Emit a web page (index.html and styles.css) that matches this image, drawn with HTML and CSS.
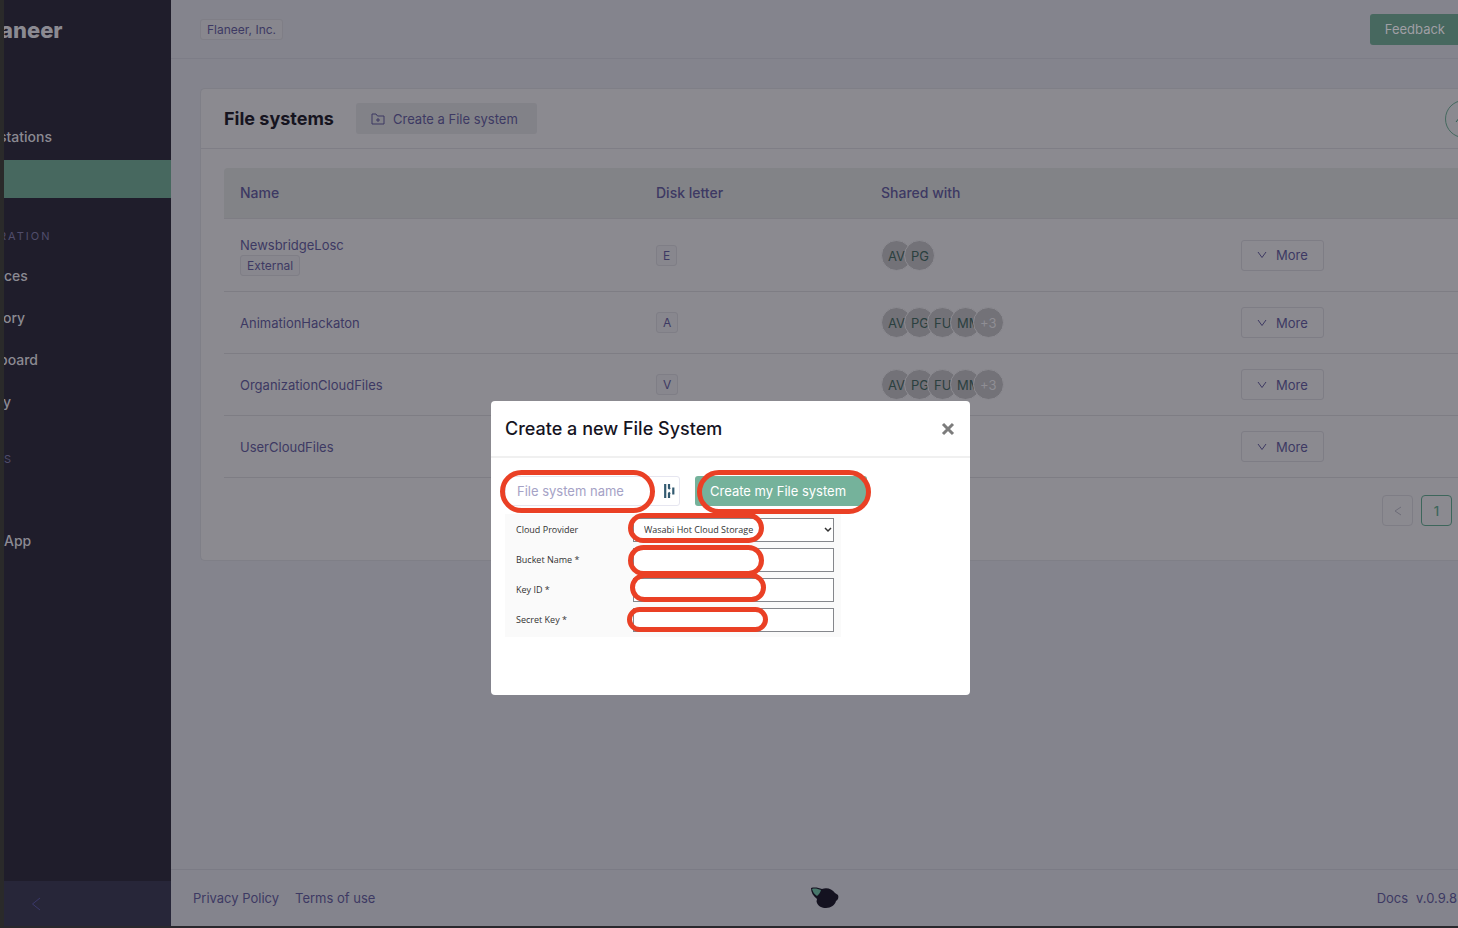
FILE: index.html
```html
<!DOCTYPE html>
<html lang="en">
<head>
<meta charset="utf-8">
<title>File systems</title>
<link rel="stylesheet" href="styles.css">
</head>
<body>
<div class="app">
  <aside class="sidebar">
    <div class="brand">aneer</div>
    <nav class="nav">
      <a class="nav-link cut-deep" href="#">stations</a>
      <a class="nav-link active" href="#" aria-label="File systems"></a>
      <h2 class="nav-title cut-deep">RATION</h2>
      <a class="nav-link" href="#">ces</a>
      <a class="nav-link cut" href="#">ory</a>
      <a class="nav-link cut-deep" href="#">board</a>
      <a class="nav-link cut" href="#">y</a>
      <h2 class="nav-title second">S</h2>
      <a class="nav-link last" href="#">App</a>
    </nav>
    <button class="collapse" aria-label="Collapse menu">
      <svg width="10" height="14" viewBox="0 0 10 14"><path d="M9 1 1.5 7 9 13"/></svg>
    </button>
  </aside>

  <div class="page">
    <header class="topbar">
      <span class="tag">Flaneer, Inc.</span>
      <button class="feedback">Feedback</button>
    </header>

    <main class="content">
      <section class="card">
        <div class="card-head">
          <h1>File systems</h1>
          <button class="create">
            <svg width="14" height="12" viewBox="0 0 14 12"><path d="M1 1h4l1.5 2H13v8H1zM7 5v4M5 7h4"/></svg>
            Create a File system
          </button>
          <button class="round" aria-label="Reload">
            <svg width="16" height="16" viewBox="0 0 16 16"><path d="M1 11 5 6l3 3"/></svg>
          </button>
        </div>
        <table class="table">
          <colgroup><col class="col-name"><col class="col-disk"><col class="col-shared"><col></colgroup>
          <thead><tr><th>Name</th><th>Disk letter</th><th>Shared with</th><th></th></tr></thead>
          <tbody>
            <tr class="tall">
              <td><div class="name">NewsbridgeLosc</div><span class="tag">External</span></td>
              <td><span class="tag">E</span></td>
              <td><div class="avatars"><span>AV</span><span>PG</span></div></td>
              <td><button class="more"><svg width="10" height="8" viewBox="0 0 10 8"><path d="M1 1l4 5.5L9 1"/></svg>More</button></td>
            </tr>
            <tr>
              <td>AnimationHackaton</td>
              <td><span class="tag">A</span></td>
              <td><div class="avatars"><span>AV</span><span>PG</span><span>FU</span><span>MM</span><span class="rest">+3</span></div></td>
              <td><button class="more"><svg width="10" height="8" viewBox="0 0 10 8"><path d="M1 1l4 5.5L9 1"/></svg>More</button></td>
            </tr>
            <tr>
              <td>OrganizationCloudFiles</td>
              <td><span class="tag">V</span></td>
              <td><div class="avatars"><span>AV</span><span>PG</span><span>FU</span><span>MM</span><span class="rest">+3</span></div></td>
              <td><button class="more"><svg width="10" height="8" viewBox="0 0 10 8"><path d="M1 1l4 5.5L9 1"/></svg>More</button></td>
            </tr>
            <tr>
              <td>UserCloudFiles</td>
              <td></td>
              <td></td>
              <td><button class="more"><svg width="10" height="8" viewBox="0 0 10 8"><path d="M1 1l4 5.5L9 1"/></svg>More</button></td>
            </tr>
          </tbody>
        </table>
        <div class="pager">
          <button aria-label="Previous page"><svg width="8" height="10" viewBox="0 0 8 10"><path d="M7 1 1 5l6 4"/></svg></button>
          <button class="current">1</button>
        </div>
      </section>
    </main>

    <footer class="footer">
      <div class="links"><a href="#">Privacy Policy</a><a href="#">Terms of use</a></div>
      <svg class="bird" width="30" height="22" viewBox="0 0 30 22"><path class="body" d="M1 1c4-1 8 0 11 1 5-2 10 0 13 4l3 2c1 2 0 5-2 6-1 4-5 7-10 7-4 0-8-2-9-5-1-2 0-3 0-4-4-3-6-7-6-11z"/><path class="wing" d="M2 2c3-1 6 0 9 1-1 3-2 4-4 6-3-2-4-4-5-7z"/></svg>
      <div class="version"><a href="#">Docs</a><span>v.0.9.8</span></div>
    </footer>
  </div>
</div>

<div class="overlay">
  <div class="modal" role="dialog" aria-labelledby="dialog-title">
    <div class="modal-head">
      <h2 id="dialog-title">Create a new File System</h2>
      <button class="close" aria-label="Close"><svg width="14" height="14" viewBox="0 0 14 14"><path d="M2 2l10 10M12 2L2 12"/></svg></button>
    </div>
    <form class="modal-body">
      <div class="name-row">
        <div class="name-field">
          <input type="text" placeholder="File system name" aria-label="File system name">
          <svg width="11" height="14" viewBox="0 0 11 14"><path d="M1.2 0v14M5 0v4l1 1M5 14V9.500l1-1M9.300 3.500v7"/></svg>
        </div>
        <button type="button" class="submit">Create my File system</button>
      </div>
      <div class="provider">
        <label for="provider">Cloud Provider</label>
        <div class="select-wrap">
          <select id="provider"><option>Wasabi Hot Cloud Storage</option></select>
          <svg class="caret" width="8" height="6" viewBox="0 0 8 6"><path d="M1 1l3 3 3-3"/></svg>
        </div>
        <label for="bucket">Bucket Name *</label><input id="bucket" type="text">
        <label for="keyid">Key ID *</label><input id="keyid" type="text">
        <label for="secret">Secret Key *</label><input id="secret" type="text">
      </div>
    </form>
    <i class="ring ring-name"></i>
    <i class="ring ring-submit"></i>
    <i class="ring ring-provider"></i>
    <i class="ring ring-bucket"></i>
    <i class="ring ring-keyid"></i>
    <i class="ring ring-secret"></i>
  </div>
</div>
</body>
</html>
```

FILE: styles.css
```css
* { box-sizing: border-box; }
body {
  margin: 0;
  overflow: hidden;
  font: 13px/20px Inter, sans-serif;
  color: #3d3963;
  background: #84848d;
}
h1, h2 { margin: 0; }
a { color: inherit; text-decoration: none; }
button, input, select { font: inherit; color: inherit; margin: 0; }
button { padding: 0; background: none; border: 0; }
svg { fill: none; stroke: currentColor; flex: none; }

.app {
  display: flex;
  height: 100vh;
  border-left: 4px solid #2a2a2a;
  border-bottom: 2px solid #29282d;
}

/* Sidebar */
.sidebar {
  flex: none;
  width: 167px;
  display: flex;
  flex-direction: column;
  overflow: hidden;
  background: #1f1d2b;
  color: #8b8a92;
}
.brand {
  height: 116px;
  padding-top: 17px;
  margin-left: -4px;
  font: 800 22px/26px Inter, sans-serif;
}
.nav { flex: 1; font-size: 14px; font-weight: 500; }
.nav-link { display: block; height: 42px; padding: 11px 0; }
.nav-link.active { height: 38px; margin-top: 2px; background: #47685f; }
.nav-title {
  height: 57px;
  padding-top: 28px;
  font: 400 11px/20px Inter, sans-serif;
  letter-spacing: 2px;
  color: #504d6b;
}
.nav-title.second { padding-top: 26px; }
.nav-link.last { margin-top: 40px; }
.cut { margin-left: -1px; }
.cut-deep { margin-left: -5px; }
.collapse {
  height: 45px;
  padding-left: 27px;
  text-align: left;
  background: #272639;
  color: #3a386a;
}
.collapse svg { display: block; }

/* Page */
.page { flex: 1; min-width: 0; display: flex; flex-direction: column; }
.topbar {
  display: flex;
  justify-content: space-between;
  align-items: center;
  height: 59px;
  padding-left: 29px;
  border-bottom: 1px solid #7d7d87;
}
.tag {
  display: inline-block;
  padding: 0 6px;
  border: 1px solid #7f7e86;
  border-radius: 3px;
  background: #88878e;
  font-size: 12px;
  line-height: 19px;
}
.topbar .tag { font-size: 12px; }
.feedback {
  height: 31px;
  padding: 0 13px 0 15px;
  border-radius: 3px 0 0 3px;
  background: #47685f;
  color: #a09fa5;
}
.content { flex: 1; padding: 29px 0 0 29px; }
.card {
  height: 473px;
  border: 1px solid #7f7f87;
  border-right: 0;
  border-radius: 5px 0 0 5px;
  background: #8b8a90;
  overflow: hidden;
}
.card-head {
  display: flex;
  align-items: center;
  height: 60px;
  padding-left: 23px;
  border-bottom: 1px solid #7f7e86;
}
h1 { font-size: 18px; font-weight: 700; color: #16141f; }
.create {
  display: flex;
  align-items: center;
  gap: 8px;
  height: 31px;
  min-width: 181px;
  margin-left: 22px;
  padding: 0 15px;
  border-radius: 3px;
  background: #828288;
}
.round {
  width: 38px;
  height: 38px;
  margin-left: auto;
  margin-right: -25px;
  padding-left: 9px;
  border: 1px solid #45695f;
  border-radius: 50%;
  color: #2f5d50;
}
.round svg { display: block; }
.table {
  width: calc(100% - 23px);
  margin: 19px 0 0 23px;
  border-collapse: separate;
  border-spacing: 0;
  table-layout: fixed;
}
.col-name { width: 416px; }
.col-disk { width: 225px; }
.col-shared { width: 360px; }
th, td { padding: 0 16px; text-align: left; border-bottom: 1px solid #7e7d84; }
th { height: 51px; font-size: 14px; font-weight: 500; background: #828387; }
th:first-child { border-top-left-radius: 4px; }
td { height: 62px; }
.tall td { height: 73px; }
.name { line-height: 18px; margin-top: 2px; }
td .tag { vertical-align: middle; }
.avatars { display: flex; }
.avatars span {
  width: 31px;
  height: 31px;
  margin-right: -8px;
  border: 1px solid #8b8a90;
  border-radius: 50%;
  background: #737278;
  color: #2b403f;
  line-height: 31px;
  padding-left: 6px;
  overflow: hidden;
}
.avatars .rest { color: #8f8e94; }
.more {
  display: flex;
  align-items: center;
  gap: 9px;
  height: 31px;
  min-width: 82px;
  padding: 0 15px;
  border: 1px solid #7e7d85;
  border-radius: 3px;
}
.pager { display: flex; justify-content: flex-end; gap: 8px; padding: 17px 6px 0 0; }
.pager button {
  width: 31px;
  height: 31px;
  border: 1px solid #7e7d85;
  border-radius: 4px;
  color: #6d6c78;
}
.pager .current { border-color: #3d665b; color: #3d665b; font-weight: 500; }

.footer {
  display: grid;
  grid-template-columns: 1fr auto 1fr;
  align-items: center;
  height: 57px;
  padding: 0 1px 0 22px;
  border-top: 1px solid #7b7b85;
}
.links { display: flex; gap: 16px; }
.version { display: flex; gap: 8px; justify-content: flex-end; }
.bird { stroke: none; }
.bird .body { fill: #141220; }
.bird .wing { fill: #47766a; }

/* Dialog */
.overlay {
  position: fixed;
  inset: 0;
  display: flex;
  justify-content: center;
  align-items: flex-start;
  padding: 401px 0 0 3px;
}
.modal {
  position: relative;
  width: 479px;
  min-height: 294px;
  border-radius: 4px;
  background: #fff;
}
.modal-head {
  display: flex;
  justify-content: space-between;
  align-items: center;
  height: 57px;
  padding: 0 15px 0 14px;
  border-bottom: 2px solid #f0f0f0;
}
.modal-head h2 { font-size: 18px; font-weight: 500; color: #16141f; }
.close { color: #7c7c7c; stroke-width: 3; }
.close svg { display: block; }
.modal-body { padding: 18px 14px 0; }
.name-row { display: flex; gap: 15px; height: 30px; }
.name-field {
  display: flex;
  align-items: center;
  width: 175px;
  padding: 0 4px 0 11px;
  border: 1px solid #e6e6f0;
  border-radius: 3px;
  color: #335a70;
  stroke-width: 2.2;
}
.name-field input { flex: 1; min-width: 0; padding: 0; border: 0; outline: 0; background: none; }
.name-field input::placeholder { color: #a5a2c6; opacity: 1; }
.submit { min-width: 172px; padding: 0 15px; border-radius: 3px; background: #75b29b; color: #fff; text-align: left; }
.provider {
  display: grid;
  grid-template-columns: 117px 201px;
  align-items: center;
  gap: 6px 0;
  width: 336px;
  margin-top: 8px;
  padding: 4px 0 5px 11px;
  background: #fafafa;
  color: #333;
  font: 9px/12px "Open Sans", sans-serif;
}
.provider input, .provider select {
  width: 100%;
  height: 24px;
  padding: 0 10px;
  border: 1px solid #85878c;
  border-radius: 0;
  background: #fff;
  appearance: none;
}
.select-wrap { position: relative; }
.caret { position: absolute; right: 2px; top: 9px; stroke-width: 1.5; }

/* Highlight rings drawn over the form */
.ring { position: absolute; border: 5px solid #ea4025; border-radius: 22px; pointer-events: none; }
.ring-name { left: 9px; top: 69px; width: 155px; height: 43px; }
.ring-submit { left: 206px; top: 69px; width: 174px; height: 44px; }
.ring-provider { left: 137px; top: 112px; width: 136px; height: 30px; }
.ring-bucket { left: 137px; top: 144px; width: 136px; height: 31px; }
.ring-keyid { left: 139px; top: 172px; width: 136px; height: 29px; }
.ring-secret { left: 136px; top: 206px; width: 141px; height: 25px; }
```
